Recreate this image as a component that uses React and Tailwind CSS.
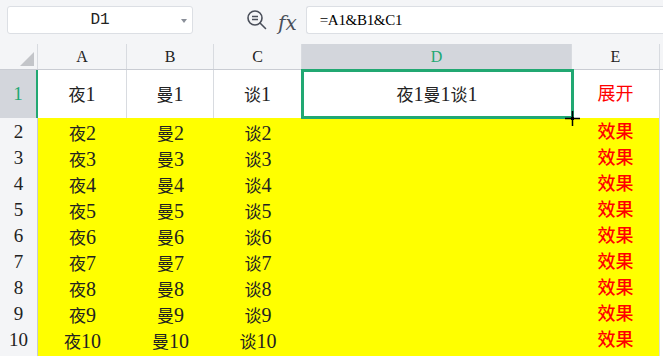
import React from "react";

const serif = { fontFamily: '"Liberation Serif", "Noto Sans CJK SC", serif' };

// column widths: row-header, A, B, C, D, E, F
const cols = "grid-cols-[38px_89px_87px_88px_270px_88px_1fr]";

const rows = [2, 3, 4, 5, 6, 7, 8, 9, 10];

// CJK glyphs and digits are sized apart, like the Song-style sheet font
function Mixed({ text }) {
  const parts = text.match(/[0-9]+|[^0-9]+/g) || [];
  return (
    <span className="leading-none">
      {parts.map((p, i) =>
        /[0-9]/.test(p) ? (
          <span key={i} className="text-[20px]">{p}</span>
        ) : (
          <span key={i} className="text-[17px]">{p}</span>
        )
      )}
    </span>
  );
}

function ZoomIcon() {
  return (
    <svg width="22" height="22" viewBox="0 0 22 22" fill="none" stroke="#4a4f5a" strokeWidth="1.6">
      <circle cx="9" cy="9" r="7" />
      <path d="M6 7.5h6M6 10.5h6" />
      <path d="M14 14l5.5 5.5" strokeLinecap="round" />
    </svg>
  );
}

function Cursor() {
  return (
    <svg width="15" height="15" viewBox="0 0 15 15" className="absolute -right-[8px] -bottom-[8px] z-20">
      <path d="M7.5 0v15M0 7.5h15" stroke="#000" strokeWidth="1.5" />
      <rect x="6" y="6" width="3" height="3" fill="#000" />
    </svg>
  );
}

export default function App() {
  return (
    <div className="w-[663px] h-[356px] overflow-hidden bg-[#f4f5f7] relative" style={serif}>
      {/* formula bar */}
      <div className="h-[44px] flex items-start pt-[6px]">
        <div className="ml-[7px] w-[186px] h-[28px] bg-white border border-[#dcdfe4] rounded-[3px] flex items-center relative">
          <span className="w-full text-center text-[16px] text-[#222]" style={{ fontFamily: '"Liberation Mono", monospace' }}>D1</span>
          <span className="absolute right-[5px] top-[12px] w-0 h-0 border-l-[3px] border-r-[3px] border-t-[4px] border-l-transparent border-r-transparent border-t-[#8a8f99]" />
        </div>
        <div className="ml-[53px] mt-[3px]">
          <ZoomIcon />
        </div>
        <span className="ml-[10px] mt-[2px] text-[20px] italic text-[#4a4f5a]" style={{ fontFamily: '"DejaVu Serif", serif' }}>fx</span>
        <div className="ml-[9px] flex-1 h-[28px] bg-white border border-[#dcdfe4] rounded-l-[3px] border-r-0 flex items-center pl-[13px]">
          <span className="text-[15px] text-black tracking-[-0.3px]">=A1&amp;B1&amp;C1</span>
        </div>
      </div>

      {/* column headers */}
      <div className={`grid ${cols} h-[26px] border-b border-[#c9ccd3]`}>
        <div className="border-r border-[#d8dbe0] relative">
          <svg width="14" height="14" className="absolute left-[20px] top-[8px]">
            <path d="M14 0L14 14L0 14Z" fill="#c3c5c9" />
          </svg>
        </div>
        {["A", "B", "C"].map((c) => (
          <div key={c} className="border-r border-[#d8dbe0] flex items-center justify-center text-[16px] text-[#222]">{c}</div>
        ))}
        <div className="bg-[#d3d6dc] border-r border-[#d8dbe0] flex items-center justify-center text-[16px] text-[#21a872]">D</div>
        <div className="border-r border-[#d8dbe0] flex items-center justify-center text-[16px] text-[#222]">E</div>
        <div />
      </div>

      {/* row 1 */}
      <div className={`grid ${cols} h-[48px]`}>
        <div className="bg-[#d3d6dc] border-r-[2px] border-[#21a872] flex items-center justify-center text-[19px] text-[#21a872]">1</div>
        {["夜1", "曼1", "谈1"].map((t) => (
          <div key={t} className="bg-white border-r border-[#d8dbe0] flex items-center justify-center text-[#222]">
            <Mixed text={t} />
          </div>
        ))}
        <div className="bg-white relative flex items-center justify-center text-[#222]">
          <div className="absolute -top-[1px] -left-[1px] -right-[2px] -bottom-[1px] border-[3px] border-[#21a872] z-10" />
          <Mixed text="夜1曼1谈1" />
          <Cursor />
        </div>
        <div className="bg-white border-r border-[#d8dbe0] flex items-center justify-center text-[18px] text-[#ff0000]">展开</div>
        <div className="bg-white" />
      </div>

      {/* rows 2-11 */}
      {[...rows, 11].map((r) => (
        <div key={r} className={`grid ${cols} h-[26px]`}>
          <div className="bg-[#f4f5f7] border-b border-r border-[#c5cad4] flex items-center justify-center text-[19px] text-[#222]">{r <= 10 ? r : ""}</div>
          {["夜", "曼", "谈"].map((p) => (
            <div key={p} className="bg-[#ffff00] flex items-center justify-center text-[#222]">
              {r <= 10 ? <Mixed text={`${p}${r}`} /> : null}
            </div>
          ))}
          <div className="bg-[#ffff00]" />
          <div className="bg-[#ffff00] border-r border-[#d8dbe0] flex items-center justify-center text-[18px] font-medium text-[#ff0000]">{r <= 10 ? "效果" : ""}</div>
          <div className="bg-white border-b border-[#d8dbe0]" />
        </div>
      ))}
    </div>
  );
}
